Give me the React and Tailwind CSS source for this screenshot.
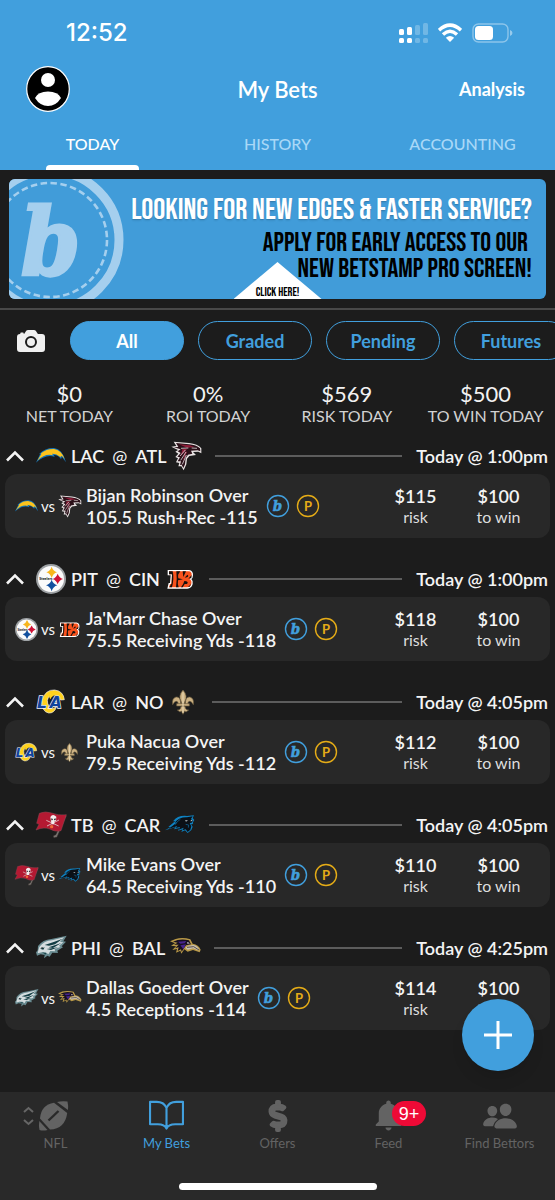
import { FaDollarSign } from 'react-icons/fa';
import { IoCamera, IoPeople } from 'react-icons/io5';
import { IoMdNotifications } from 'react-icons/io';

const tabs = ["TODAY", "HISTORY", "ACCOUNTING"];

const filters = ["All", "Graded", "Pending", "Futures"];

const stats = [
  { value: "$0", label: "NET TODAY" },
  { value: "0%", label: "ROI TODAY" },
  { value: "$569", label: "RISK TODAY" },
  { value: "$500", label: "TO WIN TODAY" },
];

const games = [
  { away: "LAC", home: "ATL", time: "Today @ 1:00pm", player: "Bijan Robinson Over", line: "105.5 Rush+Rec -115", risk: "$115", win: "$100" },
  { away: "PIT", home: "CIN", time: "Today @ 1:00pm", player: "Ja'Marr Chase Over", line: "75.5 Receiving Yds -118", risk: "$118", win: "$100" },
  { away: "LAR", home: "NO", time: "Today @ 4:05pm", player: "Puka Nacua Over", line: "79.5 Receiving Yds -112", risk: "$112", win: "$100" },
  { away: "TB", home: "CAR", time: "Today @ 4:05pm", player: "Mike Evans Over", line: "64.5 Receiving Yds -110", risk: "$110", win: "$100" },
  { away: "PHI", home: "BAL", time: "Today @ 4:25pm", player: "Dallas Goedert Over", line: "4.5 Receptions -114", risk: "$114", win: "$100" },
];

// Team logos, all on a 90x90 grid
const logos = {
  LAC: (
    <>
      <path d="M0 65 L12 40 L10 38 Q28 20 54 21 Q80 24 90 64 L78 48 L75 54 Q66 42 54 42 L56 48 Q30 38 0 65Z" fill="#1474b8" />
      <path d="M4 59 L16 39 L15 37 Q32 23 54 24 Q76 27 86 54 L77 44 L73 48 Q62 38 48 38 L51 43 Q28 36 4 59Z" fill="#fdc31c" />
    </>
  ),
  ATL: (
    <>
      <path d="M1 17 L16 15 L8 2 L54 6 Q80 9 91 22 L91 37 L82 32 L66 33 L75 42 L55 45 L48 53 L46 70 L38 88 L31 76 L22 76 L25 66 L15 64 L21 52 L13 48 L22 38 L13 32 L21 27Z" fill="#e9e4e4" />
      <path d="M8 19 L22 18 L15 6 L54 10 Q76 12 87 22 L88 31 L80 28 L60 29 L64 38 L51 41 L44 52 L42 70 L37 81 L32 71 L27 72 L30 61 L20 61 L27 49 L19 47 L29 36 L20 31 L29 25Z" fill="#2a1018" />
      <path d="M24 10 L56 13 L70 18 L48 20Z M34 24 L48 24 L30 45Z M42 32 L48 32 L35 62Z" fill="#8e1c38" />
      <path d="M30 22 L52 21 M27 45 L43 27 M29 58 L45 33 M34 70 L46 42 M62 21 L78 22" stroke="#d9cfd2" strokeWidth="2.5" />
    </>
  ),
  PIT: (
    <>
      <circle cx="45" cy="45" r="45" fill="#9ea2a5" />
      <circle cx="45" cy="45" r="39" fill="#fbfbfb" />
      <path d="M47 8 Q51 21 63 25 Q51 29 47 42 Q43 29 31 25 Q43 21 47 8Z" fill="#f7b51d" />
      <path d="M65 29 Q69 41 81 45 Q69 49 65 61 Q61 49 50 45 Q61 41 65 29Z" fill="#ce1236" />
      <path d="M47 47 Q51 60 64 64 Q51 68 47 82 Q43 68 30 64 Q43 60 47 47Z" fill="#12509f" />
      <text x="10" y="49" fontSize="11" fontWeight="900" fill="#15171a">Steelers</text>
    </>
  ),
  CIN: (
    <>
      <path d="M8 18 H72 Q85 20 84 34 Q84 42 79 45 Q85 50 83 60 Q80 73 67 74 H7 L11 57 H15 L17 34 H8Z" fill="#fff" />
      <path d="M12 22 H71 Q81 23 80 34 Q79 42 73 45 Q81 49 79 59 Q77 69 66 70 H12 L15 60 H19 L21 31 H12Z" fill="#f9521d" />
      <path d="M12 22 L23 22 Q28 42 21 70 L13 70 L20 58 L21 31 L12 31Z M34 22 L46 22 L40 31 Q38 38 40 43 L54 46 L39 49 Q37 61 41 70 L33 70 Q37 46 34 22Z M53 22 H63 L55 39Z M67 32 Q73 36 66 40 L59 41Z M58 51 Q73 52 66 60 L59 60 L53 70 L48 70 Q56 60 58 51Z M80 33 L70 44 L79 42Z M79 59 L69 69 L74 68Z" fill="#16110f" />
    </>
  ),
  LAR: (
    <>
      <path d="M18 40 Q28 7 56 9 Q82 12 85 38 L74 39 Q70 21 55 21 Q38 22 34 40 Q34 60 50 65 L61 60 Q55 79 38 78 Q16 74 18 40Z" fill="#ffd21d" stroke="#f3f3f3" strokeWidth="2" />
      <g fontFamily="'DejaVu Sans',sans-serif" fontSize="47" fontWeight="bold" fontStyle="italic" fill="#10439b" stroke="#f4f6fb" strokeWidth="4" paintOrder="stroke">
        <text x="3" y="62">L</text>
        <text x="41" y="62">A</text>
      </g>
      <path d="M39 29 Q44 17 56 17 Q69 17 75 29 Q62 22 52 26 Q46 29 43 37Z" fill="#ffd21d" />
    </>
  ),
  NO: (
    <g fill="#cdb283" stroke="#695a3e" strokeWidth="2">
      <path d="M45 9 Q61 27 50 45 L48 58 H42 L40 45 Q29 27 45 9Z" />
      <path d="M38 51 Q38 28 24 30 Q11 34 14 53 Q20 40 27 43 Q32 46 30 54Z" />
      <path d="M52 51 Q52 28 66 30 Q79 34 76 53 Q70 40 63 43 Q58 46 60 54Z" />
      <path d="M26 50 H64 V57 H26Z" />
      <path d="M39 58 Q38 70 28 69 L36 75 L40 72 L45 82 L50 72 L54 75 L62 69 Q52 70 51 58Z" />
      <path d="M45 16 V78" stroke="#eadab7" strokeWidth="3" />
    </g>
  ),
  TB: (
    <>
      <path d="M87 14 L92 17 L63 82 L53 84 L51 77 L59 74Z" fill="#77716d" stroke="#252120" strokeWidth="2" />
      <path d="M10 10 Q28 2 47 9 Q65 17 91 14 L75 62 Q57 67 41 57 Q24 50 0 60 L9 43 L2 40Z" fill="#b41932" stroke="#8b4a55" strokeWidth="1.5" />
      <path d="M31 31 L68 48 M69 30 L33 48" stroke="#e0cfd0" strokeWidth="2.5" />
      <path d="M43 21 Q50 9 61 20 L60 32 L56 34 L54 43 H47 L45 33Z" fill="#f4efef" />
      <path d="M46 25 L51 27 L49 31 L46 31Z M54 27 L59 25 L59 30 L55 31Z" fill="#241d20" />
      <circle cx="47" cy="50" r="5" fill="#ef6937" />
    </>
  ),
  CAR: (
    <>
      <path d="M0 61 L17 51 L10 51 L31 33 L24 34 Q39 15 66 18 L87 16 L83 24 L88 30 L84 37 Q86 43 78 43 L83 50 L79 60 L68 69 L60 61 L49 66 L53 58 L39 62 L43 54 L27 58 L32 51Z" fill="#0e82c2" />
      <path d="M10 57 L37 37 L29 38 Q43 21 66 22 L83 19 L78 27 L84 32 L80 38 L74 39 L79 49 L76 59 L68 66 L62 58 L53 61 L56 53 L41 59 L45 51 L32 54 L37 48Z" fill="#0b1016" />
      <path d="M60 31 L69 31 L63 35Z M79 29 L76 34 L83 33Z" fill="#b8c2ca" />
      <path d="M46 28 Q34 35 31 44 M62 43 L71 45 L70 53" stroke="#0e6fa8" strokeWidth="2" fill="none" />
    </>
  ),
  PHI: (
    <>
      <path d="M6 39 Q20 20 46 18 L92 8 L82 25 L90 26 L77 40 L81 43 L64 53 L66 60 L49 59 L41 71 L34 68 L24 76 L26 66 L14 64 L3 68 L0 58 L5 52Z" fill="#698b91" />
      <path d="M10 42 Q25 23 48 22 L84 13 L72 27 L82 28 L69 38 L73 42 L56 48 L57 55 L43 54 L37 64 L29 58 L18 58 L5 61 L7 52Z" fill="#d5dddf" />
      <path d="M26 36 L51 28 L80 17 L57 34 L39 38Z M38 43 L76 30 L51 45Z M32 48 L66 43 L45 51Z M12 47 L26 43 L22 50Z M17 58 L31 61 L25 68 L27 63Z" fill="#123d43" />
      <path d="M15 44 L21 42 L18 47Z" fill="#111" />
    </>
  ),
  BAL: (
    <>
      <path d="M0 25 L17 18 Q38 12 61 19 L68 32 Q86 35 92 50 L89 58 L69 51 L53 56 L43 49 L34 62 L31 53 L18 59 L21 48 L7 51 L18 40 L3 38 L15 31Z" fill="#b99947" />
      <path d="M9 26 Q31 15 57 22 L63 34 L48 37 L43 44 L35 56 L33 49 L23 54 L26 43 L15 46 L26 35 L12 35 L23 29Z" fill="#171020" />
      <path d="M24 26 L49 24 L44 31 L31 32Z M31 37 L48 34 L40 49Z" fill="#46248e" />
      <path d="M55 38 L71 36 Q85 39 88 53 L69 46 L53 50 L46 44Z" fill="#c8c1b6" />
      <path d="M52 27 L60 31 L52 32Z" fill="#e7e3eb" />
      <path d="M51 43 L71 41 L87 51" stroke="#40352a" strokeWidth="2.5" fill="none" />
    </>
  ),
};

const TeamLogo = ({ team, className }) => (
  <svg viewBox="0 0 90 90" className={`shrink-0 overflow-visible ${className}`} aria-hidden="true">
    {logos[team]}
  </svg>
);

const StatusBar = () => (
  <div className="flex h-[66px] items-center justify-between pl-[66px] pr-[42px]">
    <span className="font-['Inter',sans-serif] text-2xl font-medium">12:52</span>
    <div className="flex items-center gap-[10px]">
      <svg viewBox="0 0 29 22" className="h-[22px] w-[29px]" fill="#fff" aria-hidden="true">
        <rect x="0" y="7" width="5" height="6" rx="1.5" />
        <rect x="8" y="5" width="5" height="8" rx="1.5" />
        <rect x="16" y="3" width="5" height="10" rx="1.5" opacity=".25" />
        <rect x="24" y="1" width="5" height="12" rx="1.5" opacity=".25" />
        <rect x="0" y="16" width="5" height="5" rx="1.5" />
        <rect x="8" y="16" width="5" height="5" rx="1.5" />
        <rect x="16" y="16" width="5" height="5" rx="1.5" opacity=".25" />
        <rect x="24" y="16" width="5" height="5" rx="1.5" opacity=".25" />
      </svg>
      <svg viewBox="0 0 24 20" className="h-5 w-6" fill="none" stroke="#fff" strokeWidth="3.4" aria-hidden="true">
        <path d="M1 7.2 Q12 -3 23 7.2" />
        <path d="M5 11.4 Q12 5 19 11.4" />
        <path d="M12 19 L7.8 14.8 Q12 11.4 16.2 14.8Z" fill="#fff" stroke="none" />
      </svg>
      <svg viewBox="0 0 41 20" className="h-5 w-[41px]" aria-hidden="true">
        <rect x="1" y="1" width="35" height="18" rx="5.5" fill="none" stroke="#fff" strokeOpacity=".4" strokeWidth="1.4" />
        <rect x="3" y="3" width="18" height="14" rx="3.5" fill="#fff" />
        <path d="M38 7 Q40.5 8 40.5 10 Q40.5 12 38 13Z" fill="#fff" opacity=".45" />
      </svg>
    </div>
  </div>
);

const Header = () => (
  <header className="bg-[#419fdd] text-white">
    <StatusBar />
    <div className="grid h-[46px] grid-cols-3 items-center px-[26px]">
      <button aria-label="Profile" className="w-11">
        <svg viewBox="0 0 44 46" className="w-11" aria-hidden="true">
          <ellipse cx="22" cy="23" rx="21.3" ry="22.3" fill="#000" stroke="#fff" strokeWidth="1.2" />
          <circle cx="22" cy="14" r="7" fill="#fff" />
          <path d="M9 32 Q12 25.500 22 25.500 Q32 25.500 35 32 Q30 40 22 40 Q14 40 9 32Z" fill="#fff" />
        </svg>
      </button>
      <h1 className="text-center text-[22px] font-semibold">My Bets</h1>
      <a href="#analysis" className="pr-1 text-right text-lg font-bold">Analysis</a>
    </div>
    <div className="grid h-[58px] grid-cols-3">
      {tabs.map((tab, i) => (
        <button key={tab} className={`flex flex-col items-center justify-between pt-5 text-base leading-6 font-medium ${i === 0 ? 'text-white' : 'text-[#a9d8f7]'}`}>
          {tab}
          {i === 0 && <span className="h-[5px] w-[93px] rounded-t bg-white" />}
        </button>
      ))}
    </div>
  </header>
);

const Banner = () => (
  <a
    href="#pro"
    className="relative mx-[9px] mt-[9px] flex h-[120px] flex-col items-end overflow-hidden rounded-md bg-[#419cd9] pt-[14px] pr-[14px] text-right font-['Bebas_Neue','Liberation_Sans_Narrow','Roboto_Condensed',sans-serif] whitespace-nowrap text-black"
  >
    <svg viewBox="0 0 120 120" className="absolute top-0 left-0 h-[120px] w-[120px]" aria-hidden="true">
      <circle cx="41" cy="61" r="69" fill="none" stroke="#a5cfee" strokeWidth="9" />
      <circle cx="41" cy="61" r="57" fill="none" stroke="#a5cfee" strokeWidth="2.6" strokeDasharray="6.5 3.45" />
      <text x="12" y="96" fontSize="94" fontWeight="bold" fontStyle="italic" fontFamily="'DejaVu Serif Condensed','DejaVu Serif',serif" fill="#a5cfee" stroke="#a5cfee" strokeWidth="3">b</text>
    </svg>
    <span className="text-[30px] leading-[34px] text-white text-shadow-sm">LOOKING FOR NEW EDGES &amp; FASTER SERVICE?</span>
    <span className="mt-[3px] text-[27px] leading-[26px]">
      <span className="pr-1">APPLY FOR EARLY ACCESS TO OUR</span>
      <br />
      NEW BETSTAMP PRO SCREEN!
    </span>
    <span className="absolute bottom-0 left-1/2 flex h-[37px] w-[88px] -translate-x-1/2 items-end justify-center bg-white text-xs leading-3 [clip-path:polygon(50%_0,100%_100%,0_100%)]">
      CLICK HERE!
    </span>
  </a>
);

const Filters = () => (
  <div className="mt-[9px] flex items-center overflow-hidden border-t-2 border-[#484848] pt-[11px]">
    <button aria-label="Scan bet slip" className="flex w-[70px] shrink-0 items-center pl-[15px] text-[32px] text-[#f0f0f0]">
      <IoCamera />
    </button>
    <div className="flex gap-[14px]">
      {filters.map((f, i) => (
        <button
          key={f}
          className={`h-[39px] w-[114px] shrink-0 rounded-full border text-lg font-bold ${i === 0 ? 'border-[#419fdd] bg-[#419fdd] text-white' : 'border-[#419fdd] text-[#419fdd]'}`}
        >
          {f}
        </button>
      ))}
    </div>
  </div>
);

const Stats = () => (
  <dl className="mt-[22px] grid grid-cols-4 text-center whitespace-nowrap">
    {stats.map((s) => (
      <div key={s.label} className="flex flex-col-reverse">
        <dt className="text-base leading-5 text-[#d2d2d2]">{s.label}</dt>
        <dd className="text-[22px] leading-6 text-[#f2f2f2]">{s.value}</dd>
      </div>
    ))}
  </dl>
);

const Badges = () => (
  <div className="flex shrink-0 gap-[6px]">
    <svg viewBox="0 0 24 24" className="size-6" aria-hidden="true">
      <circle cx="12" cy="12" r="10.500" fill="none" stroke="#419fdd" strokeWidth="1.4" />
      <text x="11.500" y="17" textAnchor="middle" fontSize="15" fontWeight="bold" fontStyle="italic" fontFamily="'DejaVu Serif Condensed','DejaVu Serif',serif" fill="#419fdd" stroke="#419fdd" strokeWidth=".5">b</text>
    </svg>
    <svg viewBox="0 0 24 24" className="size-6" aria-hidden="true">
      <circle cx="12" cy="12" r="10.500" fill="none" stroke="#e5ac17" strokeWidth="1.4" />
      <text x="12" y="16.500" textAnchor="middle" fontSize="13" fontWeight="bold" fill="#e5ac17">P</text>
    </svg>
  </div>
);

const Amount = ({ value, label }) => (
  <div className="w-[83px] text-center">
    <div className="text-lg leading-[22px] font-semibold">{value}</div>
    <div className="text-base leading-5 text-[#dedede]">{label}</div>
  </div>
);

const Game = ({ game }) => (
  <section>
    <button className="flex h-9 w-full items-center pr-[7px] pl-[6px] text-lg font-semibold whitespace-nowrap">
      <svg viewBox="0 0 18 12" className="mr-3 w-[18px]" fill="none" stroke="#f4f4f4" strokeWidth="2.6" aria-hidden="true">
        <path d="M1 10.500 L9 2.500 L17 10.500" />
      </svg>
      <TeamLogo team={game.away} className="mr-[5px] size-[30px]" />
      <span className="flex gap-2">
        <span>{game.away}</span>
        <span className="font-normal">@</span>
        <span>{game.home}</span>
      </span>
      <TeamLogo team={game.home} className="ml-[5px] size-[30px]" />
      <span className="mx-[14px] h-[2px] flex-1 bg-[#5c5c5c]" />
      <span>{game.time}</span>
    </button>
    <div className="mx-[5px] flex h-16 items-center rounded-xl bg-[#282828] pr-[10px] pl-[10px]">
      <TeamLogo team={game.away} className="size-[23px]" />
      <span className="w-5 text-center text-[15px]">vs</span>
      <TeamLogo team={game.home} className="size-[23px]" />
      <div className="mr-2 ml-[5px] text-lg leading-[22px] font-semibold whitespace-nowrap">
        <div>{game.player}</div>
        <div>{game.line}</div>
      </div>
      <Badges />
      <div className="ml-auto flex">
        <Amount value={game.risk} label="risk" />
        <Amount value={game.win} label="to win" />
      </div>
    </div>
  </section>
);

const FootballIcon = () => (
  <svg viewBox="0 0 48 32" className="h-8 w-12" aria-hidden="true">
    <path d="M1 12 L5.500 8 L10 12 M1 20 L5.500 24 L10 20" fill="none" stroke="#666" strokeWidth="2" />
    <g fill="#636363">
      <path d="M34 2 Q38 1 44.500 1.500 Q45.500 6 45 10Z" />
      <path d="M31 2.800 L44.200 13 Q42 29 27 29.500 L17 18.500 Q18 5 31 2.800Z" />
      <path d="M16.300 21 L24.500 30 Q20 31 16.500 30 Q15.500 26 16.300 21Z" />
    </g>
    <path d="M25.500 20.500 L35.500 11" stroke="#292929" strokeWidth="2.4" />
  </svg>
);

const BookIcon = () => (
  <svg viewBox="0 0 36 32" className="h-[31px] w-[35px]" fill="none" stroke="#419fdd" strokeWidth="2.2" strokeLinejoin="round" aria-hidden="true">
    <path d="M18 8 Q15 2 8 2 H1 V25 H9 Q16 25 18 29.500 Q20 25 27 25 H35 V2 H28 Q21 2 18 8Z M18 8 V29" />
  </svg>
);

const BellIcon = () => (
  <span className="relative">
    <IoMdNotifications className="text-[37px]" />
    <span className="absolute top-[4px] left-[22px] flex h-[25px] w-[34px] items-center justify-center rounded-full bg-[#ee0a36] font-['Liberation_Sans',sans-serif] text-lg text-white">9+</span>
  </span>
);

const navItems = [
  { label: "NFL", icon: <span className="mr-[18px]"><FootballIcon /></span> },
  { label: "My Bets", icon: <BookIcon />, active: true },
  { label: "Offers", icon: <FaDollarSign className="overflow-visible stroke-[36px] text-[30px]" /> },
  { label: "Feed", icon: <BellIcon /> },
  { label: "Find Bettors", icon: <IoPeople className="text-[36px]" /> },
];

const BottomNav = () => (
  <nav className="bg-[#292929] pt-[4px] pb-[10px]">
    <div className="grid grid-cols-5">
      {navItems.map((item) => (
        <a key={item.label} href="#nav" className={`flex flex-col items-center text-[13px] leading-4 whitespace-nowrap ${item.active ? 'text-[#419fdd]' : 'text-[#636363]'}`}>
          <span className="flex h-[39px] items-center">{item.icon}</span>
          {item.label}
        </a>
      ))}
    </div>
    <div className="mx-auto mt-[32px] h-[7px] w-[198px] rounded-full bg-white" />
  </nav>
);

export default function App() {
  return (
    <div className="flex min-h-screen flex-col overflow-x-hidden bg-[#1c1c1c] font-['Lato',sans-serif] text-[#f4f4f4]">
      <Header />
      <main className="flex-1">
        <Banner />
        <Filters />
        <Stats />
        <div className="mt-3 flex flex-col gap-[23px]">
          {games.map((game) => (
            <Game key={game.away} game={game} />
          ))}
        </div>
      </main>
      <BottomNav />
      <button aria-label="Add bet" className="fixed right-[21px] bottom-[129px] flex size-[72px] items-center justify-center rounded-full bg-[#419fdd] shadow-lg">
        <svg viewBox="0 0 28 28" className="size-7" stroke="#fff" strokeWidth="3" aria-hidden="true">
          <path d="M14 0 V28 M0 14 H28" />
        </svg>
      </button>
    </div>
  );
}
